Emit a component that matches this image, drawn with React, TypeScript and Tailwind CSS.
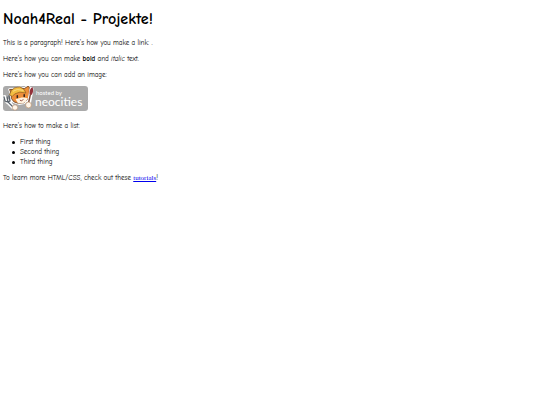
function HostBadge() {
  return (
    <svg viewBox="0 0 85 25" className="h-[25px] w-[85px]" role="img" aria-label="hosted by neocities">
      <rect width="85" height="25" rx="3" fill="#aaaaaa" />
      <path d="M1.5 11l3 5 3-1M5 16l5 5" stroke="#ffffff" strokeWidth="4" fill="none" strokeLinecap="round" strokeLinejoin="round" />
      <g transform="translate(4 0) scale(.86 .88)">
        <path d="M5 9L3 4l5 0 7-2 5 1 5-3 1 2v6l-1 6-5 5-6 1-6-2-3-4z" fill="#ee8f3a" stroke="#fff" strokeWidth="3" strokeLinejoin="round" />
        <path d="M5 9L3 4l5 0 7-2 5 1 5-3 1 2v6l-1 6-5 5-6 1-6-2-3-4z" fill="#ee8f3a" stroke="#6b3f22" strokeWidth="1" strokeLinejoin="round" />
        <path d="M3 10l2-5 4-3 6-1 5 3 2 4-7-1-6 2-3 3z" fill="#f2bd42" stroke="#8d5a20" strokeWidth="0.8" />
        <path d="M7 6l5-2 7 1" stroke="#fbe08a" strokeWidth="1" fill="none" />
        <path d="M10 15l4-1 3-1h3l4 1-2 4-4 2h-5z" fill="#fff2df" />
        <path d="M12 11v2M20 10v2" stroke="#33241e" strokeWidth="1.8" strokeLinecap="round" />
        <path d="M15 16l2 1 2-2" stroke="#8b3a2b" strokeWidth="1" fill="none" />
      </g>
      <path d="M1 11l1 4 3 1 2-1-1-5M4 11l1 5 6 6" stroke="#59616a" strokeWidth="1.3" fill="none" strokeLinecap="round" />
      <path d="M28.5 3l-1 6-1.5 8" stroke="#fff" strokeWidth="4" fill="none" strokeLinecap="round" />
      <path d="M27.5 8l-2 9" stroke="#7b4a38" strokeWidth="1.4" />
      <path d="M29.5 1c-2 1-3.5 4-3 7l2 1c2-3 2-5 1-8z" fill="#93303a" />
      <circle cx="12" cy="21.5" r="2.7" fill="#fff6ea" stroke="#b58a68" strokeWidth="0.6" />
      <circle cx="25.5" cy="19" r="2.9" fill="#fff6ea" stroke="#b98a60" strokeWidth="0.6" />
      <text x="33" y="9" fontSize="6" fill="#ffffff" className="font-['Lato',sans-serif]">hosted by</text>
      <text x="32" y="20" fontSize="12" fill="#ffffff" className="font-['Lato',sans-serif]">neocities</text>
    </svg>
  );
}

const items = ["First thing", "Second thing", "Third thing"];

export default function App() {
  return (
    <main className="flex flex-col gap-1.5 px-[3px] pt-[9px] font-['Comic_Sans_MS','Comic_Neue','Open_Sans',sans-serif] text-[7px] leading-[10px] text-black">
      <h1 className="mb-[3px] text-[16px] leading-5 font-bold">Noah4Real - Projekte!</h1>
      <p>This is a paragraph! Here's how you make a link: .</p>
      <p>Here's how you can make <strong>bold</strong> and <em>italic</em> text.</p>
      <p>Here's how you can add an image:</p>
      <div className="pb-1"><HostBadge /></div>
      <p>Here's how to make a list:</p>
      <ul className="pl-[9px]">
        {items.map((item) => (
          <li key={item} className="flex items-center gap-[5px] before:size-[3px] before:rounded-full before:bg-black">
            {item}
          </li>
        ))}
      </ul>
      <p>
        To learn more HTML/CSS, check out these{" "}
        <a href="#tutorials" className="font-['Liberation_Serif',serif] text-[#0000ee] underline">tutorials</a>!
      </p>
    </main>
  );
}
